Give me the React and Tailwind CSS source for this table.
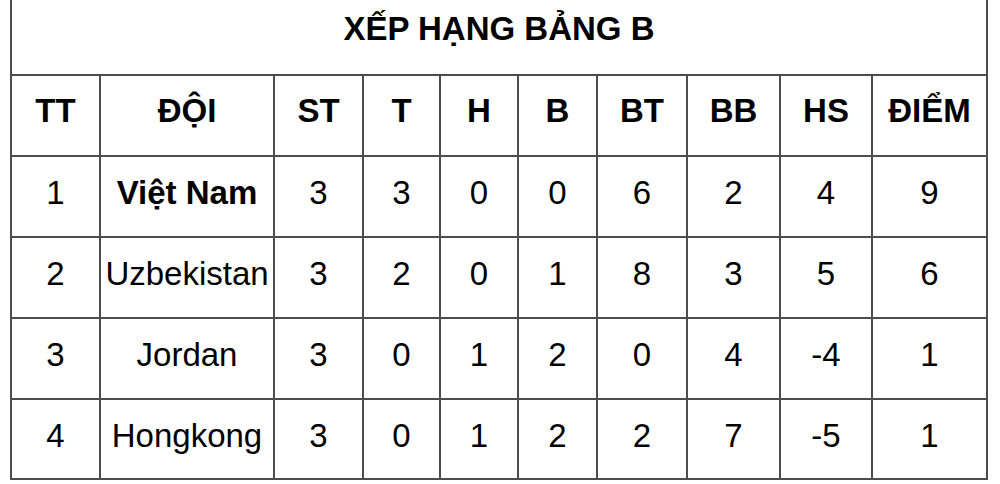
import React from "react";

const columns = ["TT", "ĐỘI", "ST", "T", "H", "B", "BT", "BB", "HS", "ĐIỂM"];

const rows = [
  { tt: 1, team: "Việt Nam", bold: true, stats: [3, 3, 0, 0, 6, 2, 4, 9] },
  { tt: 2, team: "Uzbekistan", stats: [3, 2, 0, 1, 8, 3, 5, 6] },
  { tt: 3, team: "Jordan", stats: [3, 0, 1, 2, 0, 4, -4, 1] },
  { tt: 4, team: "Hongkong", stats: [3, 0, 1, 2, 2, 7, -5, 1] },
];

const cell = "flex items-center justify-center border-r-2 border-b-2 border-[#4d4d4d]";

const App = () => {
  return (
    <div
      className="w-[1000px] h-[484px] bg-white overflow-hidden text-black pl-[10px]"
      style={{ fontFamily: '"Liberation Sans", Arial, sans-serif' }}
    >
      <div className="grid grid-cols-[89px_174px_89px_77px_78px_79px_90px_93px_92px_115px] w-[978px] border-l-2 border-[#4d4d4d]">
        <div className={`${cell} col-span-10 h-[76px] pb-[16px] text-[33px] font-bold`}>
          XẾP HẠNG BẢNG B
        </div>
        {columns.map((col) => (
          <div key={col} className={`${cell} h-[81px] pb-[10px] text-[33px] font-bold`}>
            {col}
          </div>
        ))}
        {rows.map((row, idx) => {
          const h = idx === rows.length - 1 ? "h-[80px]" : "h-[81px]";
          return (
            <React.Fragment key={row.tt}>
              <div className={`${cell} ${h} pb-[7px] text-[33px]`}>{row.tt}</div>
              <div className={`${cell} ${h} pb-[7px] text-[33px] ${row.bold ? "font-bold" : ""}`}>
                {row.team}
              </div>
              {row.stats.map((s, i) => (
                <div key={i} className={`${cell} ${h} pb-[7px] text-[33px]`}>
                  {s}
                </div>
              ))}
            </React.Fragment>
          );
        })}
      </div>
    </div>
  );
};

export default App;
